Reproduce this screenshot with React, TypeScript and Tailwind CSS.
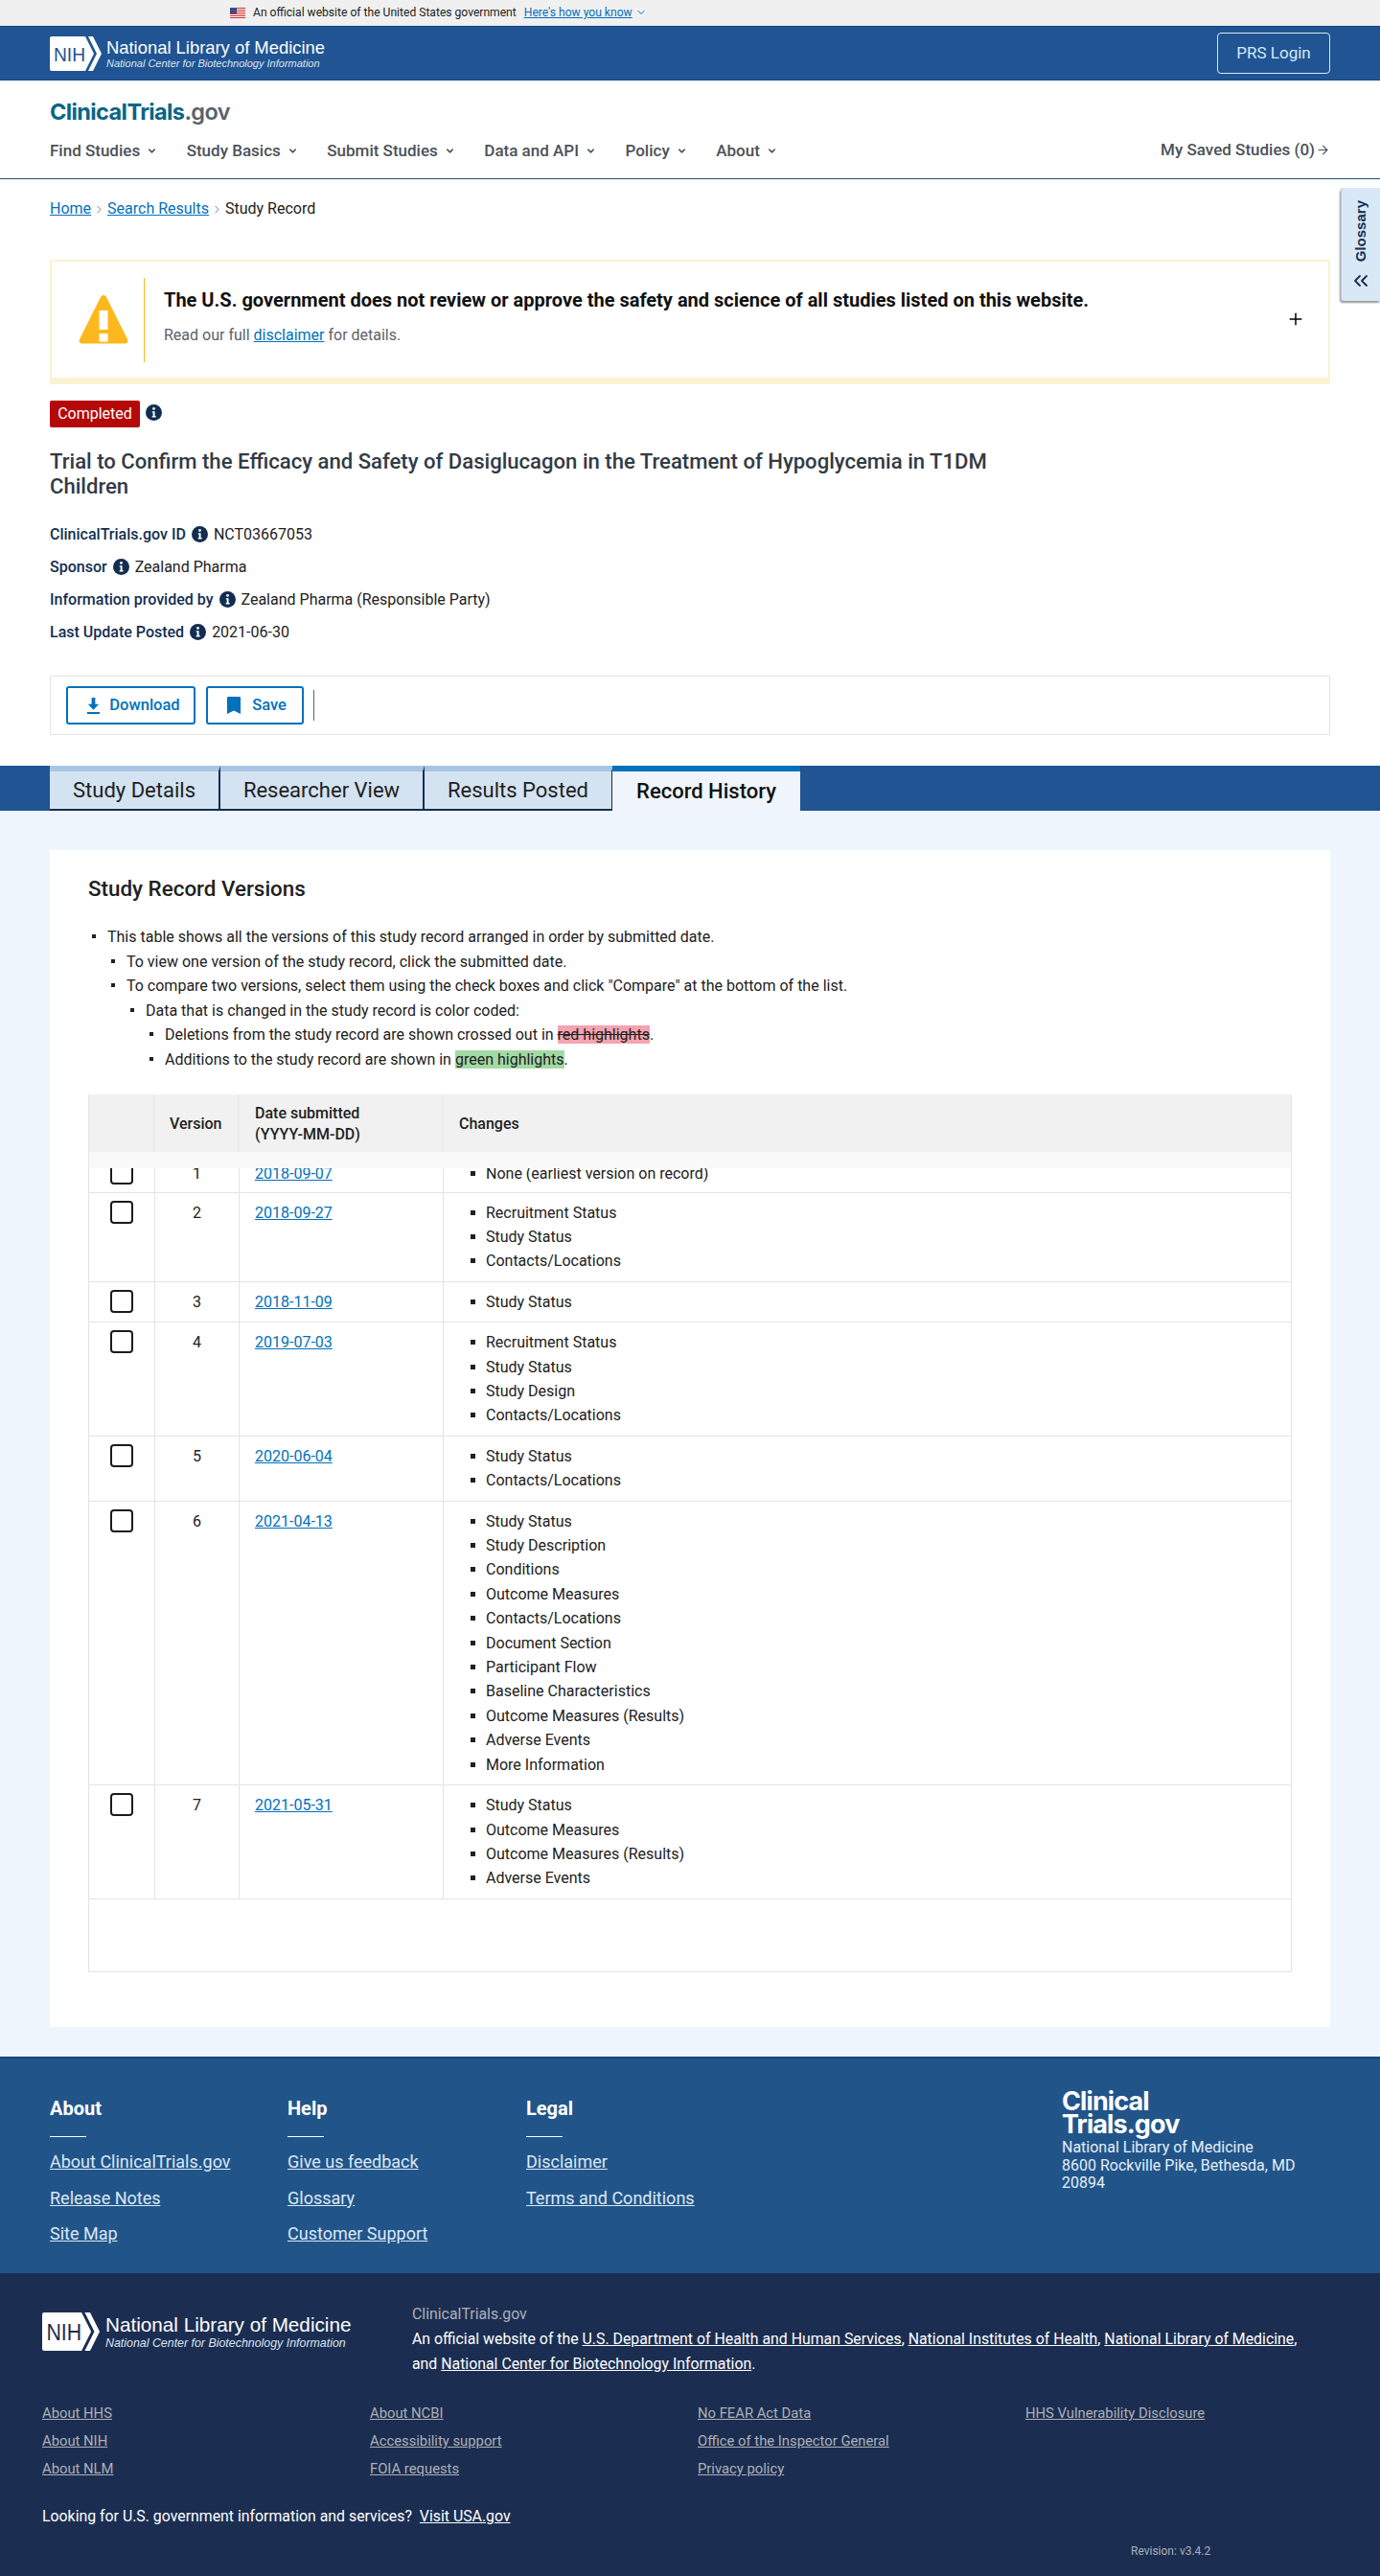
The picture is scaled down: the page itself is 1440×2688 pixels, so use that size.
import { ChevronDown, ChevronRight, ChevronsLeft, Plus, ArrowRight } from "lucide-react";

const roboto = "font-['Roboto',sans-serif]";

// NIH mark + wordmark, used in the header and in the dark footer
const NihLogo = ({ large }: { large?: boolean }) => (
  <div className={`flex items-center ${large ? "gap-[6px]" : "gap-[5px]"}`}>
    <svg viewBox="0 0 54 36" className={large ? "w-[60px] h-[40px]" : "w-[54px] h-[36px]"}>
      <path d="M2 0H37L46 18L37 36H2Q0 36 0 34V2Q0 0 2 0Z" fill="#fff" />
      <path d="M40 0H45L54 18L45 36H40L49 18Z" fill="#fff" />
      <text x="4" y="26" fontFamily="'Liberation Sans',sans-serif" fontSize="21" fill={large ? "#1b2e52" : "#205493"} textLength="33" lengthAdjust="spacingAndGlyphs">NIH</text>
    </svg>
    <div className="font-['Liberation_Sans',sans-serif] text-white">
      <div className={large ? "text-[20.7px] leading-[25px]" : "text-[18.4px] leading-[21px]"}>National Library of Medicine</div>
      <div className={`italic text-[#dce4ef] ${large ? "text-[12.4px] leading-[15px]" : "text-[11px] leading-[13px]"}`}>National Center for Biotechnology Information</div>
    </div>
  </div>
);

const InfoIcon = ({ className = "" }: { className?: string }) => (
  <svg viewBox="0 0 16 16" className={`w-[17px] h-[17px] shrink-0 ${className}`}>
    <circle cx="8" cy="8" r="8" fill="#112e51" />
    <circle cx="8" cy="4.2" r="1.3" fill="#fff" />
    <path d="M6.3 6.8H9V11.4H10V12.6H6.3V11.4H7.2V8H6.3Z" fill="#fff" />
  </svg>
);

const A = ({ children, className = "" }: { children: React.ReactNode; className?: string }) => (
  <a href="#" className={`underline ${className}`}>{children}</a>
);

const navItems = ["Find Studies", "Study Basics", "Submit Studies", "Data and API", "Policy", "About"];

const Header = () => (
  <header>
    <div className="h-[26px] bg-[#f0f0f0] flex items-center pl-[240px] text-[12.1px] text-[#212121] border-b border-[#dfe9f2] box-content">
      <svg viewBox="0 0 16 11" className="w-[16px] h-[11px] mr-[8px]">
        <rect width="16" height="11" fill="#fff" />
        <path d="M0 .5H16M0 2.5H16M0 4.5H16M0 6.5H16M0 8.5H16M0 10.5H16" stroke="#c8312c" strokeWidth="1" />
        <rect width="7" height="6" fill="#3a4a8c" />
      </svg>
      <span>An official website of the United States government</span>
      <A className="ml-[8px] text-[#0071bc]">Here's how you know</A>
      <ChevronDown className="ml-[3px] w-[12px] h-[12px] text-[#0071bc]" strokeWidth={2} />
    </div>
    <div className="h-[57px] bg-[#205493] border-y border-[#1a4480] flex items-center justify-between pl-[52px] pr-[52px]">
      <NihLogo />
      <a href="#" className="w-[118px] h-[43px] rounded-[4px] border border-[#d9e8f6] text-[#d9e8f6] text-[17px] flex items-center justify-center">PRS Login</a>
    </div>
    <div className="h-[103px] bg-white border-b border-[#205073] px-[52px] pt-[19px]">
      <div className="font-['Inter',sans-serif] font-bold text-[23.5px] leading-[28px] tracking-[-0.6px] text-[#0a6584]">
        ClinicalTrials<span className="text-[#5b616b] font-semibold">.gov</span>
      </div>
      <nav className="flex items-center justify-between mt-[14px] text-[#4c5158] font-medium text-[17px] leading-[24px]">
        <ul className="flex gap-[30.5px]">
          {navItems.map((n) => (
            <li key={n} className="flex items-center gap-[7px]">
              {n}
              <ChevronDown className="w-[11px] h-[11px]" strokeWidth={3.2} />
            </li>
          ))}
        </ul>
        <a href="#" className="flex items-center -mt-[2px]">
          My Saved Studies (0)
          <ArrowRight className="w-[15px] h-[15px] ml-[1px]" strokeWidth={1.8} />
        </a>
      </nav>
    </div>
  </header>
);

const Summary = () => (
  <section className="relative px-[52px] pt-[19px]">
    <div className="flex items-center h-[24px] text-[16px] text-[#212121]">
      <A className="text-[#0071bc]">Home</A>
      <ChevronRight className="w-[13px] h-[13px] mx-[2px] text-[#5b616b]" strokeWidth={1.5} />
      <A className="text-[#0071bc]">Search Results</A>
      <ChevronRight className="w-[13px] h-[13px] mx-[2px] text-[#5b616b]" strokeWidth={1.5} />
      <span>Study Record</span>
    </div>

    <div className="absolute right-0 top-[9px] w-[41px] h-[118px] rounded-l-[3px] bg-[#d9e8f6] border-l border-[#b8cbdd] shadow-[-1px_2px_2px_rgba(0,0,0,0.4)] flex flex-col items-center pt-[13px]">
      <span className="font-['Liberation_Sans',sans-serif] font-bold text-[15px] leading-[18px] text-[#112e51] [writing-mode:vertical-rl] rotate-180">Glossary</span>
      <ChevronsLeft className="w-[24px] h-[24px] mt-[8px] text-[#112e51]" strokeWidth={1.8} />
    </div>

    <div className="mt-[41px] h-[130px] border-2 border-b-[7px] border-[#faf3d1] flex items-center pl-[28px] pr-[24px]">
      <svg viewBox="0 0 52 52" className="w-[52px] h-[52px] shrink-0 -mt-[1px]">
        <path d="M26 1Q28 1 29 3L51 47Q52.500 51 49 51.500H3Q-.5 51 1 47L23 3Q24 1 26 1Z" fill="#fdb81e" />
        <rect x="21.500" y="17" width="9" height="20" fill="#fff" />
        <rect x="21.500" y="41" width="9" height="8.500" fill="#fff" />
      </svg>
      <div className="ml-[16px] h-[88px] w-px bg-[#fdb81e]" />
      <div className="ml-[20px] flex-1 -mt-[6px]">
        <div className="text-[20px] leading-[26px] font-bold text-[#111]">The U.S. government does not review or approve the safety and science of all studies listed on this website.</div>
        <div className="mt-[12px] text-[16px] leading-[24px] text-[#5b616b]">
          Read our full <A className="text-[#0071bc]">disclaimer</A> for details.
        </div>
      </div>
      <Plus className="w-[20px] h-[20px] text-black -mt-[2px]" strokeWidth={1.8} />
    </div>

    <div className="mt-[17px] flex items-start gap-[6px]">
      <span className="w-[94px] h-[28px] rounded-[2px] bg-[#b50909] text-white text-[16px] flex items-center justify-center">Completed</span>
      <InfoIcon className="mt-[4px]" />
    </div>

    <h1 className="mt-[23px] max-w-[1000px] text-[22.1px] leading-[25.5px] font-medium text-[#323a45]">
      Trial to Confirm the Efficacy and Safety of Dasiglucagon in the Treatment of Hypoglycemia in T1DM Children
    </h1>

    <dl className="mt-[26px] flex flex-col gap-[10px] text-[16px] leading-[24px]">
      {[
        ["ClinicalTrials.gov ID", "NCT03667053"],
        ["Sponsor", "Zealand Pharma"],
        ["Information provided by", "Zealand Pharma (Responsible Party)"],
        ["Last Update Posted", "2021-06-30"],
      ].map(([k, v]) => (
        <div key={k} className="flex items-center">
          <dt className="font-medium text-[#112e51]">{k}</dt>
          <InfoIcon className="ml-[6px] mr-[6px] -mt-[2px]" />
          <dd className="text-[#212121]">{v}</dd>
        </div>
      ))}
    </dl>

    <div className="mt-[33px] h-[62px] border border-[#e4e4e4] flex items-center pl-[16px]">
      <button className="w-[135px] h-[40px] pl-[5px] rounded-[3px] border-2 border-[#0071bc] text-[#0071bc] font-medium text-[16.500px] flex items-center justify-center gap-[9px]">
        <svg viewBox="0 0 16 20" className="w-[15px] h-[19px]"><path d="M6 1H10V8H14L8 14.500L2 8H6ZM1 17H15V19H1Z" fill="#0071bc" /></svg>
        Download
      </button>
      <button className="ml-[11px] w-[102px] h-[40px] pl-[4px] rounded-[3px] border-2 border-[#0071bc] text-[#0071bc] font-medium text-[16.500px] flex items-center justify-center gap-[12px]">
        <svg viewBox="0 0 14 18" className="w-[14px] h-[18px]"><path d="M0 1Q0 0 1 0H13Q14 0 14 1V18L7 14.500L0 18Z" fill="#0071bc" /></svg>
        Save
      </button>
      <div className="ml-[10px] w-px h-[32px] bg-[#5b616b]" />
    </div>
  </section>
);

const tabs = [
  ["Study Details", "w-[178px]"],
  ["Researcher View", "w-[213px]"],
  ["Results Posted", "w-[197px]"],
];

const Tabs = () => (
  <div className="mt-[32px] h-[47px] bg-[#205493] pl-[52px] flex">
    {tabs.map(([t, w]) => (
      <div key={t} className={`${w} h-[47px] bg-[#d4e3f2] border-t-[6px] border-t-[#a9c5e3] border-b-2 border-b-[#112e51] border-r-2 border-r-[#112e51] flex items-center justify-center text-[22px] text-[#212121]`}>
        {t}
      </div>
    ))}
    <div className="w-[196px] h-[47px] -ml-px bg-[#eff5fb] border-t-[6px] border-t-[#0071bc] flex items-center justify-center text-[22px] font-medium text-[#111]">
      Record History
    </div>
  </div>
);

const versions = [
  ["2", "2018-09-27", ["Recruitment Status", "Study Status", "Contacts/Locations"]],
  ["3", "2018-11-09", ["Study Status"]],
  ["4", "2019-07-03", ["Recruitment Status", "Study Status", "Study Design", "Contacts/Locations"]],
  ["5", "2020-06-04", ["Study Status", "Contacts/Locations"]],
  ["6", "2021-04-13", ["Study Status", "Study Description", "Conditions", "Outcome Measures", "Contacts/Locations", "Document Section", "Participant Flow", "Baseline Characteristics", "Outcome Measures (Results)", "Adverse Events", "More Information"]],
  ["7", "2021-05-31", ["Study Status", "Outcome Measures", "Outcome Measures (Results)", "Adverse Events"]],
] as [string, string, string[]][];

const cols = "grid grid-cols-[69px_88px_213px_1fr]";

const Row = ({ v, date, items }: { v: string; date: string; items: string[] }) => (
  <div className={`${cols} border-b border-[#e4e4e4] text-[16px] leading-[25.4px] text-[#212121]`}>
    <div className="flex justify-center items-start border-r border-[#e4e4e4] py-[8px]">
      <span className="w-[24px] h-[24px] rounded-[4px] border-2 border-[#1b1b1b] bg-white" />
    </div>
    <div className="text-center border-r border-[#e4e4e4] py-[8px]">{v}</div>
    <div className="pl-[16px] border-r border-[#e4e4e4] py-[8px]"><A className="text-[#0071bc]">{date}</A></div>
    <ul className="pl-[44px] py-[8px]">
      {items.map((i, idx) => (
        <li key={idx} className="list-none relative before:content-[''] before:absolute before:-left-[16px] before:top-[10px] before:w-[5px] before:h-[5px] before:bg-[#212121]">{i}</li>
      ))}
    </ul>
  </div>
);

const Bullet = ({ indent, children }: { indent: string; children: React.ReactNode }) => (
  <li className={`${indent} relative before:content-[''] before:absolute before:-ml-[16px] before:mt-[10px] before:w-[4px] before:h-[4px] before:bg-[#212121]`}>{children}</li>
);

const Versions = () => (
  <main className="bg-[#eef5fc] pt-[41px] pb-[31px] px-[52px]">
    <div className="bg-white h-[1228px] pt-[26px] px-[40px]">
      <h2 className="text-[22.4px] leading-[28px] font-medium text-[#212121]">Study Record Versions</h2>
      <ul className="mt-[24px] text-[16px] leading-[25.6px] text-[#212121]">
        <Bullet indent="ml-[20px]">This table shows all the versions of this study record arranged in order by submitted date.</Bullet>
        <Bullet indent="ml-[40px]">To view one version of the study record, click the submitted date.</Bullet>
        <Bullet indent="ml-[40px]">To compare two versions, select them using the check boxes and click "Compare" at the bottom of the list.</Bullet>
        <Bullet indent="ml-[60px]">Data that is changed in the study record is color coded:</Bullet>
        <Bullet indent="ml-[80px]">Deletions from the study record are shown crossed out in <span className="bg-[#f4a3b0] line-through">red highlights</span>.</Bullet>
        <Bullet indent="ml-[80px]">Additions to the study record are shown in <span className="bg-[#a3d9a5]">green highlights</span>.</Bullet>
      </ul>

      <div className="mt-[23px] h-[916px] border border-[#e4e4e4] border-t-0 w-[1256px]">
        <div className={`${cols} h-[60px] bg-[#f1f1f1] font-medium text-[16px] leading-[22px] text-[#212121]`}>
          <div className="border-r-2 border-[#ebebeb]" />
          <div className="flex items-center pl-[15px] pt-[2px] border-r-2 border-[#ebebeb]">Version</div>
          <div className="flex items-center pl-[16px] pt-[2px] border-r-2 border-[#ebebeb]">Date submitted<br />(YYYY-MM-DD)</div>
          <div className="flex items-center pl-[16px] pt-[2px]">Changes</div>
        </div>
        <div className="h-[17px] bg-[#f9f9f9]" />
        <div className="h-[26px] overflow-hidden border-b border-[#e4e4e4]">
          <div className="-mt-[15px]">
            <Row v="1" date="2018-09-07" items={["None (earliest version on record)"]} />
          </div>
        </div>
        {versions.map(([v, date, items]) => (
          <Row key={v} v={v} date={date} items={items} />
        ))}
      </div>
    </div>
  </main>
);

const footerCols = [
  ["About", "w-[248px]", ["About ClinicalTrials.gov", "Release Notes", "Site Map"]],
  ["Help", "w-[249px]", ["Give us feedback", "Glossary", "Customer Support"]],
  ["Legal", "w-[559px]", ["Disclaimer", "Terms and Conditions"]],
] as [string, string, string[]][];

const smallLinks = [
  ["About HHS", "About NIH", "About NLM"],
  ["About NCBI", "Accessibility support", "FOIA requests"],
  ["No FEAR Act Data", "Office of the Inspector General", "Privacy policy"],
  ["HHS Vulnerability Disclosure"],
];

const Footer = () => (
  <footer className="text-white">
    <div className="h-[226px] bg-[#21558a] border-t-2 border-[#1a4480] pl-[52px] flex">
      {footerCols.map(([title, w, links]) => (
        <div key={title} className={`${w} pt-[38px]`}>
          <div className="text-[20px] leading-[28px] font-bold">{title}</div>
          <div className="mt-[15px] w-[38px] h-px bg-white" />
          <ul className="mt-[13px] flex flex-col gap-[11px] text-[18px] leading-[26.500px] text-[#dce8f4]">
            {links.map((l) => (
              <li key={l}><A>{l}</A></li>
            ))}
          </ul>
        </div>
      ))}
      <div className="pt-[33px] w-[290px]">
        <div className="font-['Inter',sans-serif] font-bold text-[27px] leading-[24px] tracking-[-0.9px]">Clinical<br />Trials.gov</div>
        <div className="mt-[3px] text-[16px] leading-[18.500px] text-[#e6eef6]">National Library of Medicine<br />8600 Rockville Pike, Bethesda, MD 20894</div>
      </div>
    </div>
    <div className="h-[316px] bg-[#1b2e52] px-[44px] pt-[30px]">
      <div className="flex items-start">
        <div className="w-[386px] pt-[11px]"><NihLogo large /></div>
        <div className="text-[15.85px] leading-[26px]">
          <div className="text-[#aeb0b5]">ClinicalTrials.gov</div>
          <div>An official website of the <A>U.S. Department of Health and Human Services</A>, <A>National Institutes of Health</A>, <A>National Library of Medicine</A>,</div>
          <div>and <A>National Center for Biotechnology Information</A>.</div>
        </div>
      </div>
      <div className="mt-[24px] grid grid-cols-[342px_342px_342px_1fr] text-[14.800px] leading-[29px] text-[#aeb0b5]">
        {smallLinks.map((c, i) => (
          <ul key={i}>
            {c.map((l) => (
              <li key={l}><A>{l}</A></li>
            ))}
          </ul>
        ))}
      </div>
      <div className="mt-[23px] text-[15.85px] leading-[24px]">
        Looking for U.S. government information and services?&nbsp; <A>Visit USA.gov</A>
      </div>
      <div className="mt-[16px] pl-[1136px] text-[12px] leading-[16px] text-[#aeb0b5]">Revision: v3.4.2</div>
    </div>
  </footer>
);

export default function App() {
  return (
    <div className={`${roboto} w-[1440px] bg-white`}>
      <Header />
      <Summary />
      <Tabs />
      <Versions />
      <Footer />
    </div>
  );
}
